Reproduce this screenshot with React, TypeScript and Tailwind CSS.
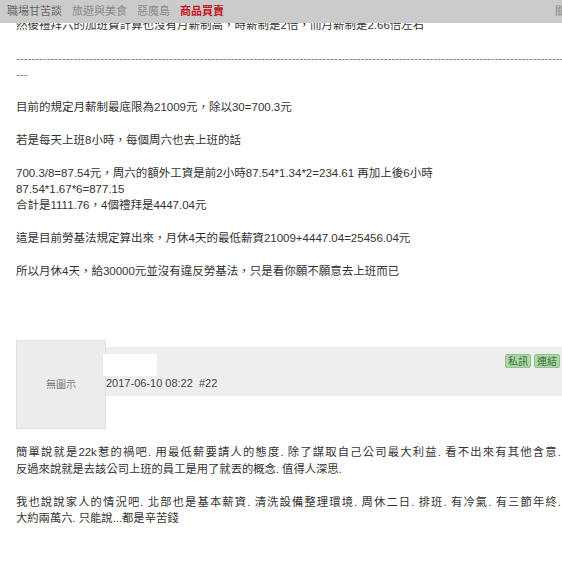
import React from 'react';

const font = { fontFamily: '"Liberation Sans", "Noto Sans CJK TC", sans-serif' };

const firstPost = [
  '然後禮拜六的加班費計算也沒有月薪制高，時薪制是2倍，而月薪制是2.66倍左右',
  '',
  '-'.repeat(200),
  '---',
  '',
  '目前的規定月薪制最底限為21009元，除以30=700.3元',
  '',
  '若是每天上班8小時，每個周六也去上班的話',
  '',
  '700.3/8=87.54元，周六的額外工資是前2小時87.54*1.34*2=234.61 再加上後6小時',
  '87.54*1.67*6=877.15',
  '合計是1111.76，4個禮拜是4447.04元',
  '',
  '這是目前勞基法規定算出來，月休4天的最低薪資21009+4447.04=25456.04元',
  '',
  '所以月休4天，給30000元並沒有違反勞基法，只是看你願不願意去上班而已',
];

// [text, justified]
const secondPost: [string, boolean][] = [
  ['簡單說就是22k惹的禍吧. 用最低薪要請人的態度. 除了謀取自己公司最大利益. 看不出來有其他含意.', true],
  ['反過來說就是去該公司上班的員工是用了就丟的概念. 值得人深思.', false],
  ['', false],
  ['我也說說家人的情況吧. 北部也是基本薪資. 清洗設備整理環境. 周休二日. 排班. 有冷氣. 有三節年終.', true],
  ['大約兩萬六. 只能說...都是辛苦錢', false],
];

export default function App() {
  return (
    <div className="relative w-[562px] h-[565px] overflow-hidden bg-white" style={font}>
      {/* sticky top nav */}
      <div className="absolute top-0 left-0 right-0 z-10 h-[23px] bg-[#cbcbcb] flex items-center pl-[7px] gap-[10px] text-[11px]">
        <span className="text-[#666]">職場甘苦談</span>
        <span className="text-[#8a8a8a]">旅遊與美食</span>
        <span className="text-[#8a8a8a]">惡魔島</span>
        <span className="text-[#c4161c] font-bold">商品買賣</span>
        <span className="ml-auto mr-[-4px] text-[#888]">關</span>
      </div>

      <div className="pl-4 pt-[17px]">
        <div className="text-[11.5px] leading-[16.4px] text-[#333]">
          {firstPost.map((l, i) => (
            <div
              key={i}
              className={`h-[16.4px] whitespace-nowrap overflow-hidden ${l.startsWith('-') ? 'text-[#777]' : ''}`}
            >
              {l}
            </div>
          ))}
        </div>

        {/* post header */}
        <div className="flex mt-[61px]">
          <div className="w-[90px] h-[89px] bg-[#ececec] border border-[#e0e0e0] flex items-center justify-center text-[10px] text-[#777] shrink-0">
            無圖示
          </div>
          <div className="flex-1 mt-[7px] h-[49px] bg-[#eeeeee] flex justify-between">
            <div className="flex flex-col">
              <div className="mt-[7px] -ml-[3px] w-[54px] h-[22px] bg-white" />
              <div className="text-[11px] leading-[14px] text-[#444]">2017-06-10 08:22&nbsp; #22</div>
            </div>
            <div className="flex gap-[3px] mt-[7px] mr-[2px] h-[14px]">
              <span className="px-[2px] h-[14px] leading-[13px] text-[10px] text-[#3f6f3f] bg-[#acd7a6] border border-[#94c38e] rounded-[2px]">私訊</span>
              <span className="px-[2px] h-[14px] leading-[13px] text-[10px] text-[#3f6f3f] bg-[#acd7a6] border border-[#94c38e] rounded-[2px]">連結</span>
            </div>
          </div>
        </div>

        <div className="mt-[15px] w-[545px] text-[11.3px] leading-[16.5px] text-[#333]">
          {secondPost.map(([l, just], i) => (
            <div
              key={i}
              className={`h-[16.5px] whitespace-nowrap ${just ? 'text-justify [text-align-last:justify]' : ''}`}
            >
              {l}
            </div>
          ))}
        </div>
      </div>
    </div>
  );
}
